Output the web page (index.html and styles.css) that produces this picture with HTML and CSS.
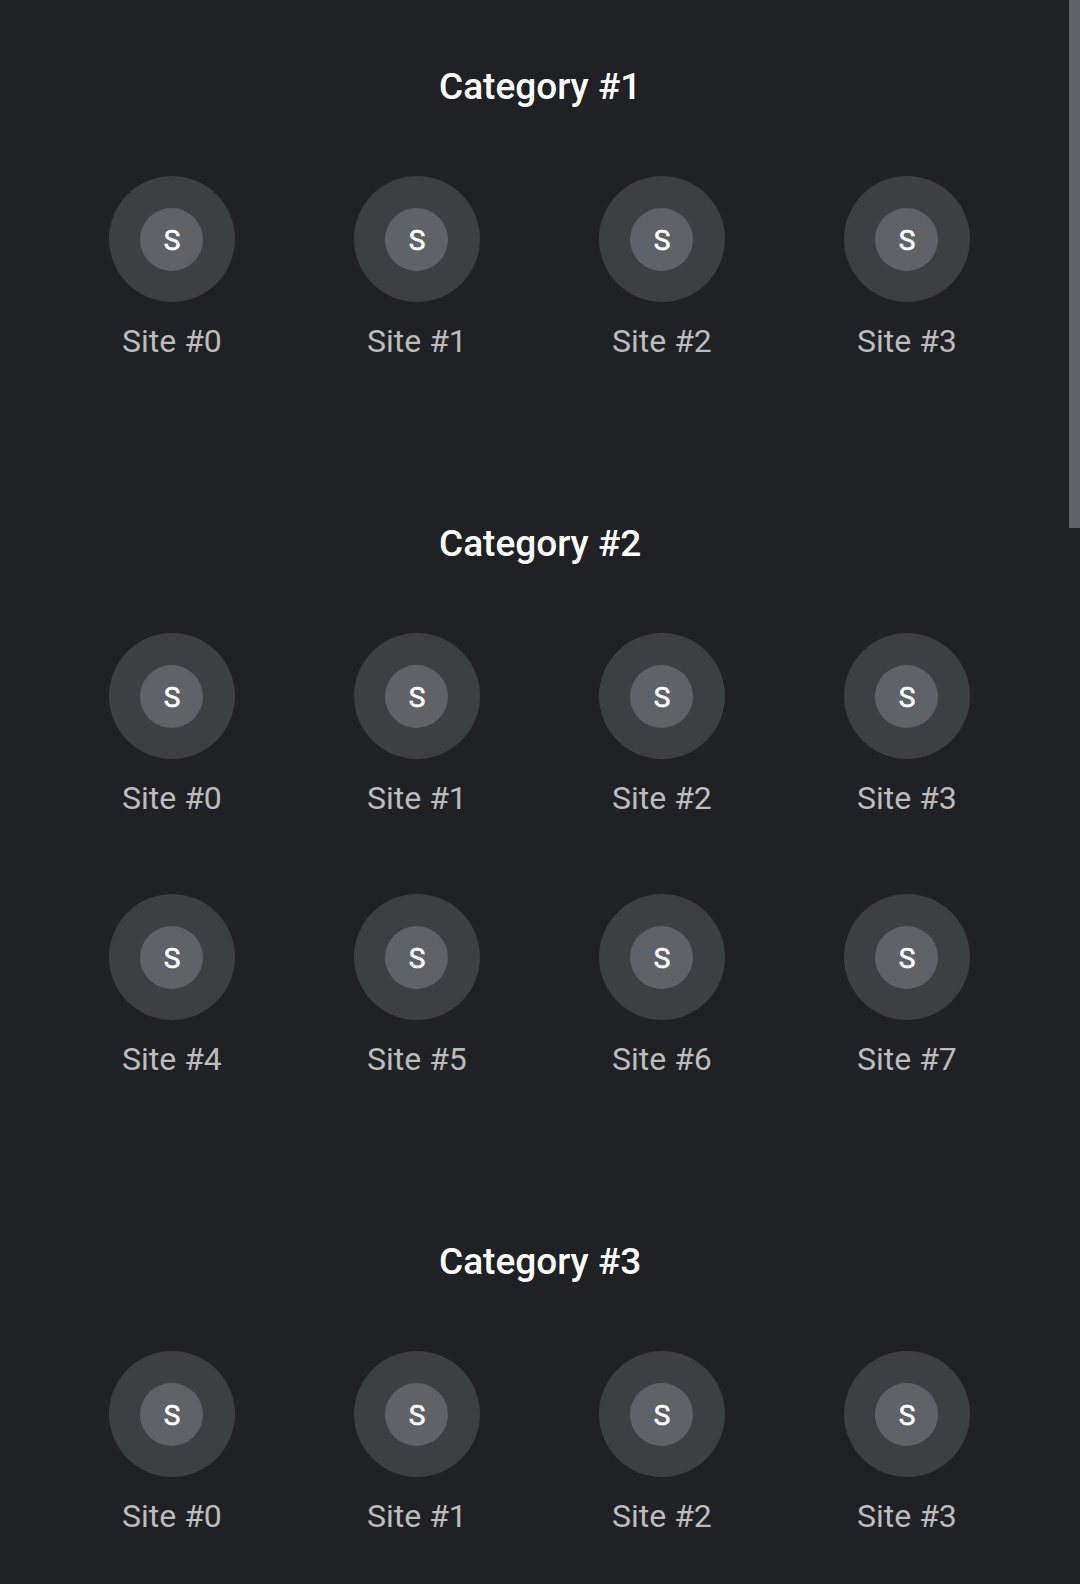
FILE: index.html
```html
<!DOCTYPE html>
<html lang="en">
<head>
<meta charset="utf-8">
<title>Explore sites</title>
<link rel="stylesheet" href="styles.css">
</head>
<body>
<main class="page">
  <section class="category">
    <h2 class="title">Category #1</h2>
    <div class="sites">
      <div class="site"><div class="tile"><span class="monogram">S</span></div><span class="label">Site #0</span></div>
      <div class="site"><div class="tile"><span class="monogram">S</span></div><span class="label">Site #1</span></div>
      <div class="site"><div class="tile"><span class="monogram">S</span></div><span class="label">Site #2</span></div>
      <div class="site"><div class="tile"><span class="monogram">S</span></div><span class="label">Site #3</span></div>
    </div>
  </section>
  <section class="category">
    <h2 class="title">Category #2</h2>
    <div class="sites">
      <div class="site"><div class="tile"><span class="monogram">S</span></div><span class="label">Site #0</span></div>
      <div class="site"><div class="tile"><span class="monogram">S</span></div><span class="label">Site #1</span></div>
      <div class="site"><div class="tile"><span class="monogram">S</span></div><span class="label">Site #2</span></div>
      <div class="site"><div class="tile"><span class="monogram">S</span></div><span class="label">Site #3</span></div>
      <div class="site"><div class="tile"><span class="monogram">S</span></div><span class="label">Site #4</span></div>
      <div class="site"><div class="tile"><span class="monogram">S</span></div><span class="label">Site #5</span></div>
      <div class="site"><div class="tile"><span class="monogram">S</span></div><span class="label">Site #6</span></div>
      <div class="site"><div class="tile"><span class="monogram">S</span></div><span class="label">Site #7</span></div>
    </div>
  </section>
  <section class="category">
    <h2 class="title">Category #3</h2>
    <div class="sites">
      <div class="site"><div class="tile"><span class="monogram">S</span></div><span class="label">Site #0</span></div>
      <div class="site"><div class="tile"><span class="monogram">S</span></div><span class="label">Site #1</span></div>
      <div class="site"><div class="tile"><span class="monogram">S</span></div><span class="label">Site #2</span></div>
      <div class="site"><div class="tile"><span class="monogram">S</span></div><span class="label">Site #3</span></div>
    </div>
  </section>
  <div class="scrollbar"></div>
</main>
</body>
</html>
```

FILE: styles.css
```css
* { box-sizing: border-box; }
body {
  margin: 0;
  background: #202124;
  font-family: Roboto, sans-serif;
}
.page {
  position: relative;
  height: 1584px;
  overflow: hidden;
  padding-top: 65px;
}
.category { margin-bottom: 165px; }
.title {
  margin: 0 0 67px;
  padding-left: 439px;
  font-size: 37px;
  line-height: 44px;
  font-weight: 500;
  color: #fff;
}
.sites {
  display: grid;
  grid-template-columns: repeat(4, 126px);
  column-gap: 119px;
  row-gap: 80px;
  padding-left: 109px;
}
.site {
  display: flex;
  flex-direction: column;
  height: 181px;
}
.tile {
  display: flex;
  flex: none;
  align-items: flex-start;
  width: 126px;
  height: 126px;
  padding: 32px 0 0 31px;
  border-radius: 50%;
  background: #3c4043;
}
.monogram {
  width: 63px;
  height: 63px;
  padding-left: 1px;
  border-radius: 50%;
  background: #5f6368;
  color: #fff;
  font-size: 28px;
  line-height: 66px;
  font-weight: 400;
  -webkit-text-stroke: 0.6px #fff;
  text-align: center;
}
.label {
  margin-top: 20px;
  padding-left: 13px;
  font-size: 32px;
  line-height: 38px;
  white-space: nowrap;
  color: #bcbcbd;
}
.scrollbar {
  position: absolute;
  top: 0;
  right: 0;
  width: 11px;
  height: 528px;
  background: #5f6368;
}
```
